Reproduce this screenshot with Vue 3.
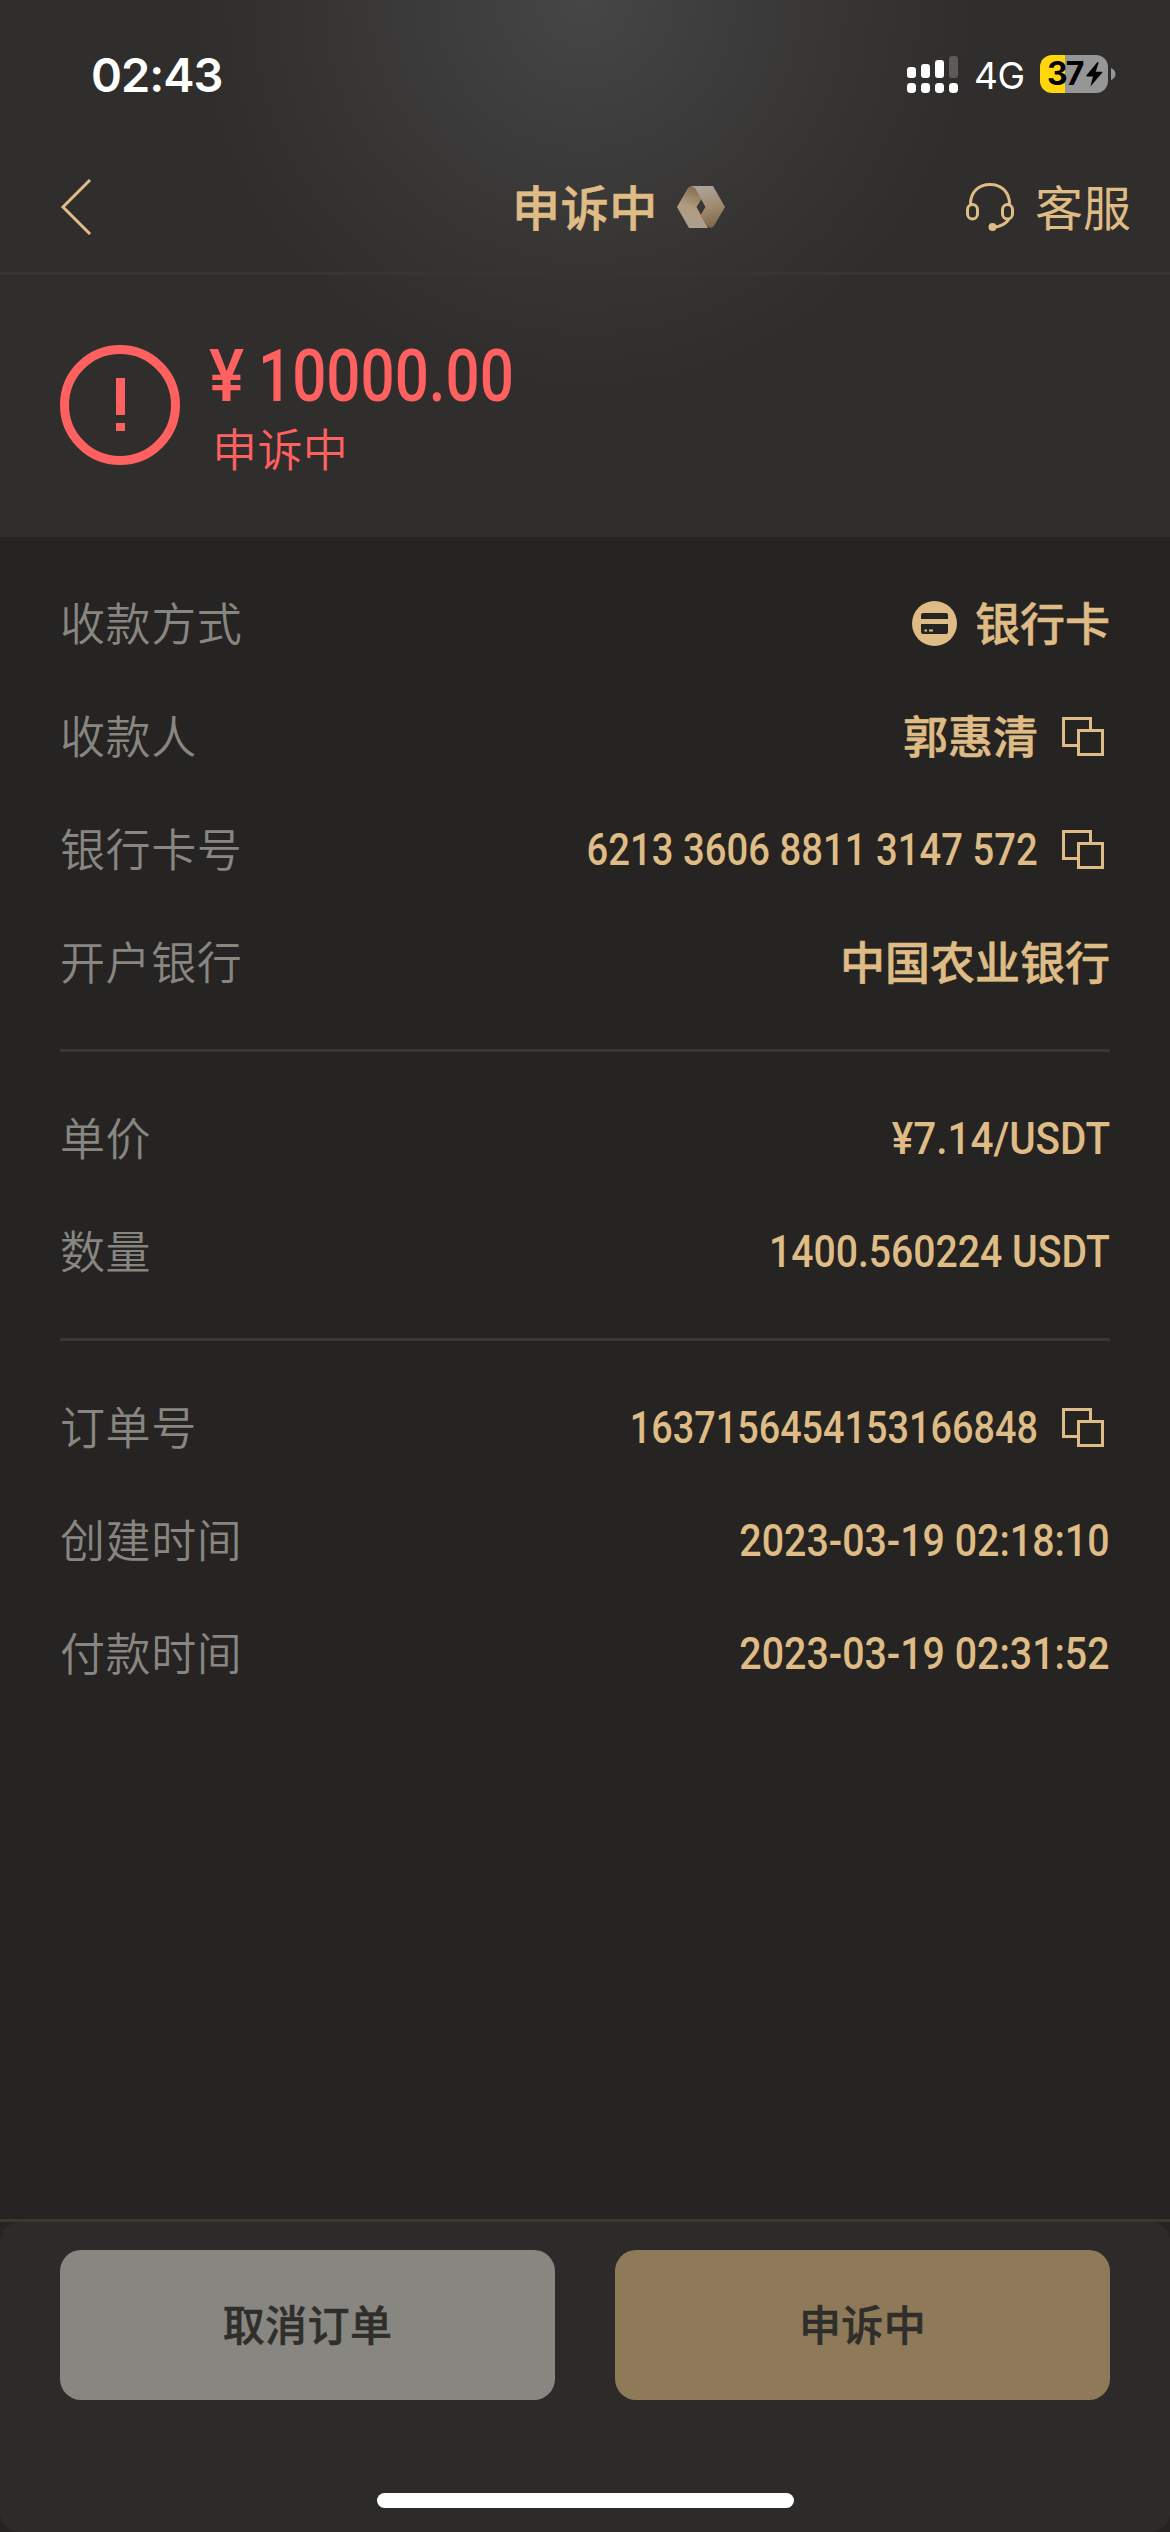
<script setup>
const groups = [
  [
    { label: '收款方式', value: '银行卡', card: true },
    { label: '收款人', value: '郭惠清', copy: true },
    { label: '银行卡号', value: '6213 3606 8811 3147 572', copy: true, num: 0.85 },
    { label: '开户银行', value: '中国农业银行' },
  ],
  [
    { label: '单价', value: '¥7.14/USDT', num: 0.898 },
    { label: '数量', value: '1400.560224 USDT', num: 0.87 },
  ],
  [
    { label: '订单号', value: '1637156454153166848', copy: true, num: 0.84 },
    { label: '创建时间', value: '2023-03-19 02:18:10', num: 0.874 },
    { label: '付款时间', value: '2023-03-19 02:31:52', num: 0.874 },
  ],
]
const bars = [11, 14, 18, 22]
</script>

<template>
  <div class="screen">
    <header class="top">
      <div class="status">
        <span class="time">02:43</span>
        <div class="status-right">
          <svg class="signal" width="51" height="38" viewBox="0 0 51 38">
            <g v-for="(h, i) in bars" :key="i" fill="#fff">
              <rect :x="i * 14" :y="23 - h" width="9" :height="h" rx="3" :opacity="i === 3 ? 0.22 : 1" />
              <rect :x="i * 14" y="28" width="9" height="10" rx="3.4" />
            </g>
          </svg>
          <span class="net">4G</span>
          <div class="battery">
            <span class="level">37</span>
            <svg width="17" height="25" viewBox="0 0 17 25">
              <path d="M11.5 0 L0.3 13.6 Q0 14.4 1 14.4 H7 L4.4 24.6 L16.4 10.6 Q16.7 9.7 15.7 9.7 H9.8 L12.6 0.4 Z" fill="#000" />
            </svg>
          </div>
          <svg class="nub" width="5" height="12" viewBox="0 0 5 12"><path d="M0 0 Q4.5 2 4.5 6 T0 12 Z" fill="#969696" /></svg>
        </div>
      </div>
      <nav class="nav">
        <svg class="back" width="32" height="56" viewBox="0 0 32 56">
          <path d="M30 1 L3 28 L30 55" fill="none" stroke="#dfbb85" stroke-width="3" />
        </svg>
        <div class="title">
          <span>申诉中</span>
          <svg width="48" height="42" viewBox="0 0 48 42">
            <defs>
              <linearGradient id="foldLeft" x1="0.6" y1="0" x2="0.3" y2="1">
                <stop offset="0" stop-color="#806a4c" />
                <stop offset="0.5" stop-color="#b19b7e" />
                <stop offset="1" stop-color="#aaa096" />
              </linearGradient>
              <linearGradient id="foldRight" x1="0.5" y1="0" x2="0.7" y2="1">
                <stop offset="0" stop-color="#aba298" />
                <stop offset="0.5" stop-color="#a08b6e" />
                <stop offset="1" stop-color="#7c6547" />
              </linearGradient>
            </defs>
            <path d="M14 0 L18 1.5 L24.5 13 L19.5 21 L31 42 H12 L0 21 L11 2 Z" fill="url(#foldLeft)" />
            <path d="M14 0 H36 L48 21 L37 40 L34 42 L30 40 L23.5 29 L28.5 21 L18 2 Z" fill="url(#foldRight)" />
          </svg>
        </div>
        <div class="service">
          <svg width="48" height="48" viewBox="0 0 48 48" fill="none" stroke="#dfbb85" stroke-width="3">
            <path d="M4.5 21 C4.5 9 12.5 1.5 24 1.5 S43.5 9 43.5 21" />
            <rect x="1.5" y="21.5" width="10" height="14.5" rx="5" />
            <rect x="36.5" y="21.5" width="10" height="14.5" rx="5" />
            <path d="M43 36 Q39 43 27 44.5" />
            <circle cx="26.5" cy="44" r="4" fill="#dfbb85" stroke="none" />
          </svg>
          <span>客服</span>
        </div>
      </nav>
      <section class="summary">
        <svg width="120" height="120" viewBox="0 0 120 120">
          <circle cx="60" cy="60" r="55.5" fill="none" stroke="#ff6060" stroke-width="9" />
          <path d="M56 33 h9 v37 h-9 z M56 78 h9 v8 h-9 z" fill="#ff6060" />
        </svg>
        <div class="summary-text">
          <div class="amount"><span class="yen">¥</span><span class="sum">10000.00</span></div>
          <div class="state">申诉中</div>
        </div>
      </section>
    </header>

    <main class="details">
      <section v-for="(group, g) in groups" :key="g" class="group">
        <div v-for="row in group" :key="row.label" class="row">
          <span class="label">{{ row.label }}</span>
          <div class="value">
            <svg v-if="row.card" class="card" width="45" height="45" viewBox="0 0 45 45">
              <circle cx="22.5" cy="22.5" r="22.5" fill="#dfbb85" />
              <path d="M9 18 V14 Q9 12 11 12 H34 Q36 12 36 14 V18 Z M9 23 H36 V31 Q36 33 34 33 H11 Q9 33 9 31 Z" fill="#252422" />
              <path d="M12.5 29.5 h2.5 M17 29.5 h4" stroke="#dfbb85" stroke-width="2" />
            </svg>
            <span v-if="row.num" class="num" :style="{ transform: `scaleX(${row.num})` }">{{ row.value }}</span>
            <span v-else class="name">{{ row.value }}</span>
            <svg v-if="row.copy" class="copy" width="48" height="39" viewBox="0 0 48 39" fill="none" stroke="#dfbb85" stroke-width="3">
              <path d="M15 28.5 H1.5 V1.5 H28.5 V12" />
              <rect x="16.5" y="13.5" width="24" height="24" />
            </svg>
          </div>
        </div>
      </section>
    </main>

    <footer class="bottom">
      <div class="panel">
        <div class="actions">
          <button class="btn cancel">取消订单</button>
          <button class="btn appeal">申诉中</button>
        </div>
        <div class="home"></div>
      </div>
    </footer>
  </div>
</template>

<style>
body {
  margin: 0;
  background: #252422;
}
</style>

<style scoped>
.screen {
  width: 1170px;
  height: 2532px;
  display: flex;
  flex-direction: column;
  overflow: hidden;
  background: #252422;
  color: #dfbb85;
  font-family: "Noto Sans CJK SC", sans-serif;
}
.top {
  height: 537px;
  flex: none;
  background: radial-gradient(circle 385px at 585px 0, #464647 0%, #3c3b3b 42%, #353432 72%, #2f2e2c 100%) #2f2e2c;
}
.status {
  height: 142px;
  box-sizing: border-box;
  padding: 6px 54px 0 91px;
  display: flex;
  align-items: center;
  justify-content: space-between;
  color: #fff;
  font-family: Inter, sans-serif;
}
.time {
  font-size: 47px;
  font-weight: 600;
  letter-spacing: -1px;
}
.status-right {
  display: flex;
  align-items: center;
}
.net {
  width: 50px;
  margin: 4px 0 0 16px;
  font-size: 37px;
  line-height: 40px;
  letter-spacing: -0.5px;
  white-space: nowrap;
}
.battery {
  width: 68px;
  height: 38px;
  margin-left: 16px;
  padding-left: 7px;
  box-sizing: border-box;
  border-radius: 12px;
  display: flex;
  align-items: center;
  background: linear-gradient(90deg, #ffd60a 25px, #969696 25px);
}
.level {
  width: 39px;
  font-size: 32px;
  font-weight: 700;
  line-height: 38px;
  letter-spacing: -2px;
  color: #000;
}
.nub {
  margin-left: 3px;
}
.nav {
  height: 130px;
  padding: 0 39px 0 60px;
  display: grid;
  grid-template-columns: 1fr auto 1fr;
  align-items: center;
  border-bottom: 3px solid #38342f;
}
.title {
  display: flex;
  align-items: center;
  gap: 19px;
  margin-left: 46px;
  font-size: 48px;
  font-weight: 500;
  line-height: 60px;
  letter-spacing: 0.6px;
  -webkit-text-stroke: 0.6px currentColor;
}
.title span,
.service span {
  padding-bottom: 5px;
}
.service {
  justify-self: end;
  display: flex;
  align-items: center;
  gap: 21px;
  font-size: 48px;
  line-height: 60px;
}
.summary {
  padding: 70px 60px 0;
  display: flex;
  gap: 29px;
}
.amount {
  display: flex;
  height: 64px;
  color: #ff6060;
  font: 500 72px/64px Roboto, sans-serif;
}
.yen,
.sum {
  transform: scaleX(0.835);
  transform-origin: left;
}
.yen {
  width: 49px;
  transform: scaleX(0.92);
}
.state {
  margin: 7px 0 0 3px;
  color: #ff6060;
  font-size: 45px;
  font-weight: 350;
  line-height: 64px;
  letter-spacing: 0.4px;
}
.details {
  flex: 1;
}
.group {
  margin: 0 60px;
  padding: 30px 0;
}
.group + .group {
  border-top: 3px solid #3c362f;
}
.row {
  height: 113px;
  display: flex;
  align-items: center;
  justify-content: space-between;
}
.label {
  padding-bottom: 4px;
  color: #888681;
  font-size: 45px;
  font-weight: 350;
  line-height: 60px;
  letter-spacing: 0.6px;
}
.value {
  display: flex;
  align-items: center;
}
.name {
  padding-bottom: 4px;
  font-size: 45px;
  font-weight: 500;
  line-height: 60px;
  -webkit-text-stroke: 0.6px currentColor;
}
.num {
  font: 500 45px/60px Roboto, sans-serif;
  transform-origin: right;
  white-space: nowrap;
}
.card {
  margin-right: 18px;
}
.copy {
  margin-left: 24px;
}
.bottom {
  height: 310px;
  flex: none;
  border-top: 3px solid #3c362f;
}
.panel {
  height: 310px;
  box-sizing: border-box;
  padding: 28px 60px 0;
  border-radius: 20px;
  background: #2c2b29;
}
.actions {
  display: flex;
  gap: 60px;
}
.btn {
  flex: 1;
  height: 150px;
  padding: 0 0 4px;
  border: 0;
  border-radius: 21px;
  color: #2f2e2b;
  font: 500 42px/60px "Noto Sans CJK SC", sans-serif;
  letter-spacing: 0.4px;
  -webkit-text-stroke: 0.5px currentColor;
}
.cancel {
  background: #888681;
}
.appeal {
  background: #8e7958;
}
.home {
  width: 417px;
  height: 15px;
  margin: 93px auto 0;
  border-radius: 8px;
  background: #fff;
}
</style>
